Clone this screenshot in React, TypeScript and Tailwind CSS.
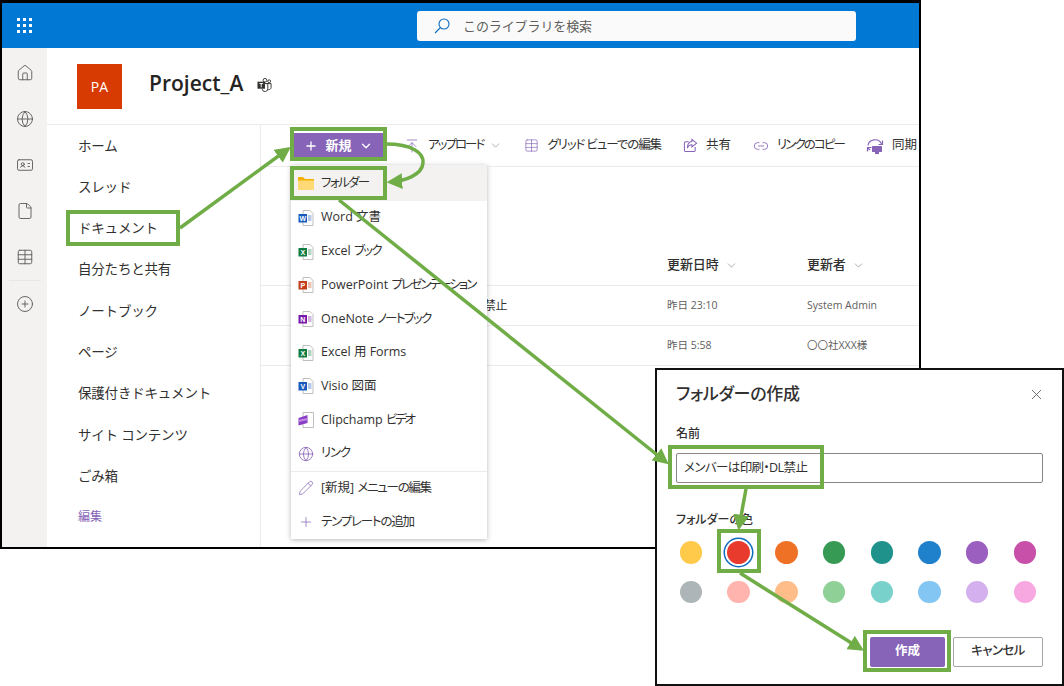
import { ArrowUpToLine, ChevronDown, CirclePlus, File, Globe, Home, IdCard, Link2, Pencil, Plus, Table, X } from "lucide-react";
import type { ReactNode } from "react";

const navItems = ["ホーム", "スレッド", "ドキュメント", "自分たちと共有", "ノートブック", "ページ", "保護付きドキュメント", "サイト コンテンツ", "ごみ箱"];

const folderColors = [
  "bg-[#ffc94a]", "bg-[#e83a2d]", "bg-[#ef7125]", "bg-[#369a54]", "bg-[#1f928c]", "bg-[#1f80cc]", "bg-[#9b5fc0]", "bg-[#c950a8]",
  "bg-[#adb5b8]", "bg-[#ffb4ae]", "bg-[#ffbd8a]", "bg-[#8ed095]", "bg-[#79d1cb]", "bg-[#84c6f3]", "bg-[#d5b0ee]", "bg-[#f8a8e0]",
];

function DocIcon({ color, letter }: { color: string; letter: string }) {
  return (
    <svg viewBox="0 0 16 16" className="w-4 h-4 shrink-0">
      <path d="M5 .5h7l3 3v12H5z" fill="#fff" stroke="#b0aeac" strokeWidth="0.8" />
      <path d="M10 6h3.500M10 8h3.500M10 10h3.500" stroke={color} strokeWidth="0.9" opacity="0.7" />
      <rect x="0.500" y="4" width="8.500" height="8.500" fill={color} />
      <text x="4.750" y="10.700" textAnchor="middle" fontSize="7" fontWeight="700" fill="#fff" fontFamily="Liberation Sans">{letter}</text>
    </svg>
  );
}

function FolderIcon() {
  return (
    <svg viewBox="0 0 16 13" className="w-4 h-[13px] shrink-0">
      <path d="M0 1.200C0 .6.500 0 1 0h4l2 2h8c.6 0 1 .4 1 1v1H0z" fill="#f2b000" />
      <path d="M0 3.500h16V12c0 .6-.4 1-1 1H1c-.6 0-1-.4-1-1z" fill="#ffd975" />
    </svg>
  );
}

function ClipchampIcon() {
  return (
    <svg viewBox="0 0 16 16" className="w-4 h-4 shrink-0">
      <path d="M5 .5h10.500v15H5z" fill="#fff" stroke="#b0aeac" strokeWidth="0.8" />
      <path d="M.5 6l9-3v8l-9 2.500z" fill="#8a3fc6" />
      <path d="M.5 8l9-2v2l-9 2z" fill="#c48ae8" />
    </svg>
  );
}

function SearchIcon() {
  return (
    <svg viewBox="0 0 16 16" className="w-4 h-4 shrink-0 mt-[1px]" fill="none" stroke="#0f6cbd" strokeWidth="1.1">
      <circle cx="10" cy="6" r="5" />
      <path d="M6.500 9.500L1 15" />
    </svg>
  );
}

const menuItems: { label: string; kana?: string; track?: string; icon: ReactNode }[] = [
  { label: "Word 文書", icon: <DocIcon color="#185abd" letter="W" /> },
  { label: "Excel ", kana: "ブック", track: "tracking-[-1.7px]", icon: <DocIcon color="#107c41" letter="X" /> },
  { label: "PowerPoint ", kana: "プレゼンテーション", track: "tracking-[-1.9px]", icon: <DocIcon color="#c43e1c" letter="P" /> },
  { label: "OneNote ", kana: "ノートブック", track: "tracking-[-1.7px]", icon: <DocIcon color="#7719aa" letter="N" /> },
  { label: "Excel 用 Forms", icon: <DocIcon color="#107c41" letter="X" /> },
  { label: "Visio 図面", icon: <DocIcon color="#185abd" letter="V" /> },
  { label: "Clipchamp ", kana: "ビデオ", track: "tracking-[-2.3px]", icon: <ClipchampIcon /> },
  { label: "", kana: "リンク", track: "tracking-[-1.3px]", icon: <Globe className="w-4 h-4 shrink-0 text-[#8764b8]" strokeWidth={1.25} /> },
];

function ShareIcon() {
  return (
    <svg viewBox="0 0 16 16" className="w-[15px] h-[15px] text-[#8764b8]" fill="none" stroke="currentColor" strokeWidth="1.1">
      <path d="M13 9.500v3.500a1.500 1.500 0 0 1-1.500 1.500H3A1.500 1.500 0 0 1 1.500 13V5.500A1.500 1.500 0 0 1 3 4h3" />
      <path d="M9.500 1.500L14.500 5.500L9.500 9.500V7.200C7 7.200 5.500 8.500 4.700 10.800C4.700 7 6.500 4 9.500 3.800Z" />
    </svg>
  );
}

function SyncIcon() {
  return (
    <svg viewBox="0 0 18 16" className="w-[18px] h-4 text-[#8764b8]" fill="none" stroke="currentColor" strokeWidth="1.200">
      <path d="M2 7.500A7 6.500 0 0 1 15.500 6" />
      <path d="M16.500 2.500v4h-4M1.500 9.500l2.500 2.500M1.500 13.500v-4h4" />
      <rect x="6" y="8" width="10" height="6" rx="0.5" fill="currentColor" stroke="none" />
      <rect x="9" y="14" width="4" height="2" fill="currentColor" stroke="none" />
    </svg>
  );
}

function TeamsIcon() {
  return (
    <svg viewBox="0 0 16 16" className="w-[15px] h-[15px] text-[#323130]" fill="none" stroke="currentColor" strokeWidth="1">
      <circle cx="8.500" cy="3.500" r="2" />
      <circle cx="13" cy="4.500" r="1.500" />
      <path d="M10 7h5v4a2.500 2.500 0 0 1-3 2.500" />
      <path d="M5 7h6.500v5a3 3 0 0 1-6 1" />
      <rect x="0.500" y="5" width="8" height="7.500" fill="currentColor" stroke="none" />
      <path d="M2.500 7h4M4.500 7v4" stroke="#fff" />
    </svg>
  );
}

function CommandItem({ icon, label, track, chevron }: { icon: ReactNode; label: string; track?: string; chevron?: boolean }) {
  return (
    <div className="flex items-center gap-2 shrink-0">
      {icon}
      <span className={`text-[12.5px] [font-feature-settings:'palt'] text-[#323130] whitespace-nowrap ${track ?? ""}`}>{label}</span>
      {chevron && <ChevronDown className="w-[13px] h-[13px] -ml-[2px] text-[#8a8886]" strokeWidth={1.25} />}
    </div>
  );
}

function Arrows() {
  const green = "#70ad47";
  return (
    <svg viewBox="0 0 1064 686" className="absolute inset-0 w-[1064px] h-[686px] pointer-events-none" fill="none">
      <defs>
        <marker id="head" markerWidth="4.500" markerHeight="4.500" refX="3.500" refY="2.250" orient="auto">
          <path d="M0 0L4.500 2.250L0 4.500z" fill={green} />
        </marker>
      </defs>
      <g stroke={green} strokeWidth="3.500">
        <path d="M180 228L288 149" markerEnd="url(#head)" />
        <path d="M386 144C412 144 424 153 423 163C422 175 405 181 390 182" markerEnd="url(#head)" />
        <path d="M339 200L666 462" markerEnd="url(#head)" />
        <path d="M746 489L739 527" markerEnd="url(#head)" />
        <path d="M740 573L861 649" markerEnd="url(#head)" />
      </g>
    </svg>
  );
}

export default function App() {
  return (
    <div className="relative w-[1064px] h-[686px] overflow-hidden bg-white font-['Open_Sans','Noto_Sans_CJK_JP',sans-serif] text-[#323130]">
      {/* SharePoint window */}
      <div className="w-[921px] h-[549px] border-2 border-t-[3px] border-black flex flex-col overflow-hidden">
        <div className="h-[45px] shrink-0 bg-[#0078d4] relative flex items-center">
          <div className="w-[45px] flex justify-center">
            <div className="grid grid-cols-3 gap-[3px]">
              {Array.from({ length: 9 }).map((_, i) => (
                <div key={i} className="w-[3px] h-[3px] bg-white" />
              ))}
            </div>
          </div>
          <div className="ml-[370px] w-[439px] h-[30px] bg-[#fafafa] rounded-[3px] flex items-center pl-[17px] gap-[13px]">
            <SearchIcon />
            <span className="text-[13px] pt-[2px] tracking-[-0.1px] text-[#605e5c]">このライブラリを検索</span>
          </div>
        </div>

        <div className="flex-1 flex min-h-0">
          {/* app rail */}
          <div className="w-[45px] shrink-0 bg-[#f3f2f1] pt-[2px] flex flex-col items-center text-[#605e5c]">
            <div className="h-[46px] flex items-center"><Home className="w-[18px] h-[18px]" strokeWidth={1.25} /></div>
            <div className="h-[46px] flex items-center"><Globe className="w-[18px] h-[18px]" strokeWidth={1.25} /></div>
            <div className="h-[46px] flex items-center"><IdCard className="w-[18px] h-[18px]" strokeWidth={1.25} /></div>
            <div className="h-[46px] flex items-center"><File className="w-[18px] h-[18px]" strokeWidth={1.25} /></div>
            <div className="h-[46px] flex items-center"><Table className="w-[18px] h-[18px]" strokeWidth={1.25} /></div>
            <div className="w-8 border-t border-[#e8e6e4]" />
            <div className="h-[46px] flex items-center"><CirclePlus className="w-[18px] h-[18px]" strokeWidth={1.25} /></div>
          </div>

          <div className="flex-1 flex flex-col min-w-0">
            {/* site header */}
            <div className="h-[77px] shrink-0 border-b border-[#edebe9] flex items-center pl-[30px]">
              <div className="w-[45px] h-[45px] bg-[#d83b01] text-white text-[14px] flex items-center justify-center">PA</div>
              <h1 className="ml-[27px] mb-[5px] text-[21px] font-semibold text-[#252423]">Project_A</h1>
              <div className="ml-[14px] mb-[4px]"><TeamsIcon /></div>
            </div>

            <div className="flex-1 flex min-h-0">
              <nav className="w-[214px] shrink-0 border-r border-[#edebe9] pl-[31px]">
                {navItems.map((item) => (
                  <div key={item} className="h-[41.3px] flex items-center text-[13.5px] tracking-[-0.2px] text-[#323130] whitespace-nowrap">{item}</div>
                ))}
                <div className="h-[41.3px] flex items-center text-[12px] text-[#8764b8]">編集</div>
              </nav>

              <div className="flex-1 min-w-0 flex flex-col">
                <div className="h-[42px] shrink-0 border-b border-[#edebe9] flex items-center pl-[33px] overflow-hidden">
                  <button className="w-[89px] h-[26px] shrink-0 bg-[#8764b8] text-white text-[13px] font-semibold flex items-center justify-center gap-[7px]">
                    <Plus className="w-[14px] h-[14px]" strokeWidth={2.25} />
                    <span>新規</span>
                    <ChevronDown className="w-[14px] h-[14px]" strokeWidth={2.25} />
                  </button>
                  <div className="ml-[21px] flex items-center gap-[22px]">
                    <CommandItem icon={<ArrowUpToLine className="w-4 h-4 text-[#8764b8]" strokeWidth={1.1} />} label="アップロード" track="tracking-[-2px]" chevron />
                    <CommandItem icon={<Table className="w-[15px] h-[15px] text-[#8764b8]" strokeWidth={1.1} />} label="グリッド ビューでの編集" track="tracking-[-1.1px]" />
                    <CommandItem icon={<ShareIcon />} label="共有" />
                    <CommandItem icon={<Link2 className="w-4 h-4 text-[#8764b8]" strokeWidth={1.25} />} label="リンクのコピー" track="tracking-[-1.9px]" />
                    <CommandItem icon={<SyncIcon />} label="同期" />
                  </div>
                </div>

                {/* file list */}
                <div className="mt-[81px] h-[38px] pb-[3px] shrink-0 border-b border-[#edebe9] flex items-center text-[13px] font-medium tracking-[-0.1px] text-[#323130]">
                  <div className="w-[406px] shrink-0" />
                  <div className="w-[140px] shrink-0 flex items-center gap-[6px]">更新日時<ChevronDown className="w-[13px] h-[13px] text-[#8a8886]" strokeWidth={1.25} /></div>
                  <div className="flex items-center gap-[6px]">更新者<ChevronDown className="w-[13px] h-[13px] text-[#8a8886]" strokeWidth={1.25} /></div>
                </div>
                <div className="h-[40px] shrink-0 border-b border-[#edebe9] flex items-center text-[10.5px] text-[#605e5c]">
                  <div className="w-[246px] shrink-0 text-right text-[12px] tracking-[-0.4px] text-[#323130] whitespace-nowrap">メンバーは印刷・DL禁止</div>
                  <div className="w-[160px] shrink-0" />
                  <div className="w-[140px] shrink-0">昨日 23:10</div>
                  <div>System Admin</div>
                </div>
                <div className="h-[40px] shrink-0 border-b border-[#edebe9] flex items-center text-[10.5px] text-[#605e5c]">
                  <div className="w-[406px] shrink-0" />
                  <div className="w-[140px] shrink-0">昨日 5:58</div>
                  <div>〇〇社XXX様</div>
                </div>
              </div>
            </div>
          </div>
        </div>
      </div>

      {/* 新規 menu */}
      <div className="absolute left-[291px] top-[165px] w-[196px] bg-white shadow-[0_1px_5px_rgba(0,0,0,0.28)] text-[12.5px] [font-feature-settings:'palt'] text-[#323130]">
        <div className="h-[36px] bg-[#f3f2f1] flex items-center pl-[7px] gap-[7px]">
          <FolderIcon />
          <span className="tracking-[-1.6px]">フォルダー</span>
        </div>
        {menuItems.map((item) => (
          <div key={item.label + item.kana} className="h-[33.7px] flex items-center pl-[7px] gap-[7px] whitespace-pre">
            {item.icon}
            <span>{item.label}{item.kana && <span className={item.track}>{item.kana}</span>}</span>
          </div>
        ))}
        <div className="border-t border-[#edebe9]">
          <div className="h-[33.7px] flex items-center pl-[7px] gap-[7px] whitespace-nowrap">
            <Pencil className="w-4 h-4 text-[#8764b8]" strokeWidth={1.1} />
            <span>[新規] <span className="tracking-[-1.3px]">メニューの編集</span></span>
          </div>
          <div className="h-[33.7px] flex items-center pl-[7px] gap-[7px] whitespace-nowrap">
            <Plus className="w-4 h-4 text-[#8764b8]" strokeWidth={1.1} />
            <span className="tracking-[-1.2px]">テンプレートの追加</span>
          </div>
        </div>
      </div>

      {/* フォルダーの作成 dialog */}
      <div className="absolute left-[655px] top-[368px] w-[409px] h-[318px] bg-white border-2 border-[#111] pl-[19px] pr-[19px]">
        <div className="h-[48px] flex items-center justify-between">
          <h2 className="text-[17px] font-medium [font-feature-settings:'palt'] tracking-[-0.3px] text-[#323130]">フォルダーの作成</h2>
          <X className="w-[17px] h-[17px] mr-[-2px] text-[#605e5c]" strokeWidth={1.25} />
        </div>
        <div className="h-[31px] mb-[4px] flex items-center text-[12px] font-medium text-[#323130]">名前</div>
        <div className="h-[30px] w-[367px] border-[1.5px] border-[#8a8886] rounded-[2px] flex items-center pl-[7px] text-[12.5px] [font-feature-settings:'palt'] tracking-[-0.6px] text-[#323130]">メンバーは印刷・DL禁止</div>
        <div className="mt-[28px] h-[18px] flex items-center text-[12px] font-medium [font-feature-settings:'palt'] text-[#323130]">フォルダーの色</div>
        <div className="mt-[12px] ml-[3.75px] grid grid-cols-[repeat(8,22.5px)] gap-x-[25.2px] gap-y-[17px]">
          {folderColors.map((color, i) => (
            <div key={color} className={`w-[22.5px] h-[22.5px] rounded-full ${color} ${i === 1 ? "shadow-[0_0_0_2px_#fff,0_0_0_3.5px_#0f6cbd]" : ""}`} />
          ))}
        </div>
        <div className="mt-[33.5px] flex justify-end gap-[8px]">
          <button className="w-[75px] h-[30px] bg-[#8764b8] rounded-[2px] text-white text-[12.5px] font-semibold">作成</button>
          <button className="w-[90px] h-[30px] bg-white border border-[#a8a6a4] rounded-[2px] text-[12.5px] font-medium [font-feature-settings:'palt'] tracking-[-0.6px] text-[#323130]">キャンセル</button>
        </div>
      </div>

      {/* annotations */}
      <div className="absolute left-[66px] top-[210px] w-[114px] h-[36px] border-[4px] border-[#70ad47]" />
      <div className="absolute left-[290px] top-[127px] w-[97px] h-[34px] border-[4px] border-[#70ad47]" />
      <div className="absolute left-[290px] top-[166px] w-[97px] h-[34px] border-[4px] border-[#70ad47]" />
      <div className="absolute left-[668px] top-[445px] w-[156px] h-[44px] border-[4px] border-[#70ad47]" />
      <div className="absolute left-[717px] top-[529px] w-[44px] h-[44px] border-[4px] border-[#70ad47]" />
      <div className="absolute left-[863px] top-[630px] w-[88px] h-[42px] border-[4px] border-[#70ad47]" />
      <Arrows />
    </div>
  );
}
